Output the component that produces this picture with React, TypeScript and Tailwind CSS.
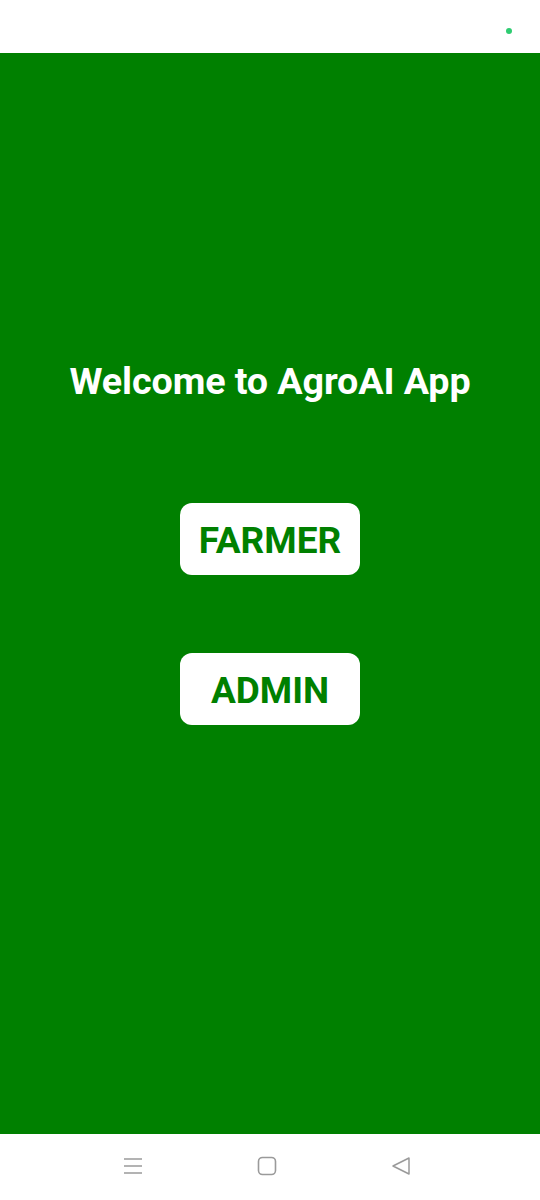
export default function App() {
  return (
    <div className="w-[540px] h-[1200px] flex flex-col bg-white" style={{ fontFamily: "Roboto, 'Noto Sans', sans-serif" }}>
      <div className="h-[53px] bg-white flex items-center justify-end pr-[28px]">
        <div className="w-[6px] h-[6px] rounded-full bg-[#2ecc71] mt-[8px]" />
      </div>
      <div className="h-[1081px] bg-[#008000] flex flex-col items-center pt-[306px]">
        <h1 className="text-white font-bold text-[37.7px] leading-[44px] tracking-[-0.1px] whitespace-nowrap">Welcome to AgroAI App</h1>
        <button className="mt-[100px] w-[180px] h-[72px] bg-white rounded-[12px] text-[#008000] font-bold text-[37px] leading-none pt-[3px]">FARMER</button>
        <button className="mt-[78px] w-[180px] h-[72px] bg-white rounded-[12px] text-[#008000] font-bold text-[37px] leading-none pt-[3px]">ADMIN</button>
      </div>
      <div className="flex-1 bg-white flex items-center justify-center gap-[114px] pr-[6px] pb-[2px]">
        <svg width="20" height="20" viewBox="0 0 20 20">
          <path d="M1 3h18M1 10h18M1 17h18" stroke="#9a9a9a" strokeWidth="1.4" fill="none" />
        </svg>
        <svg width="20" height="20" viewBox="0 0 20 20">
          <rect x="1.5" y="1.5" width="17" height="17" rx="4" stroke="#9a9a9a" strokeWidth="1.6" fill="none" />
        </svg>
        <svg width="20" height="20" viewBox="0 0 20 20">
          <path d="M18 2v16L2 10z" stroke="#9a9a9a" strokeWidth="1.5" strokeLinejoin="round" fill="none" />
        </svg>
      </div>
    </div>
  );
}
